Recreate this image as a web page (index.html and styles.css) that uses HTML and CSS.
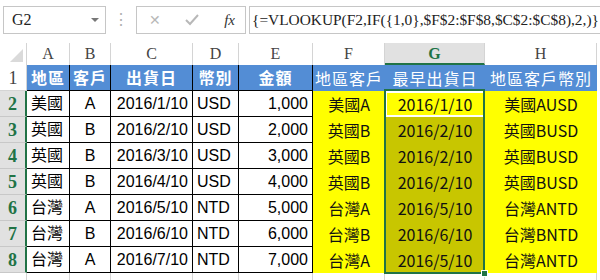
FILE: index.html
```html
<!DOCTYPE html>
<html lang="zh-Hant">
<head>
    <meta charset="UTF-8">
    <title>VLOOKUP 最早出貨日</title>
    <link rel="stylesheet" href="styles.css">
</head>
<body>
    <div class="formula-row">
        <div class="name-box">
            <span>G2</span>
            <span class="drop"></span>
        </div>
        <div class="grip">&#8942;</div>
        <div class="buttons">
            <span class="btn-x">&#x2715;</span>
            <svg class="btn-ok" width="14" height="12" viewBox="0 0 14 12"><path d="M1 6 L5 10 L13 1" fill="none" stroke="#b8b8b8" stroke-width="2"/></svg>
            <span class="btn-fx">fx</span>
        </div>
        <div class="formula">{=VLOOKUP(F2,IF({1,0},$F$2:$F$8,$C$2:$C$8),2,)}</div>
    </div>

    <div class="sheet">
        <!-- column headers -->
        <div class="corner"><span class="tri"></span></div>
        <div class="ch">A</div>
        <div class="ch">B</div>
        <div class="ch">C</div>
        <div class="ch">D</div>
        <div class="ch">E</div>
        <div class="ch">F</div>
        <div class="ch ch-sel">G</div>
        <div class="ch">H</div>
        <div class="ch ch-end"></div>

        <!-- row 1 -->
        <div class="rh">1</div>
        <div class="hd">地區</div>
        <div class="hd">客戶</div>
        <div class="hd">出貨日</div>
        <div class="hd">幣別</div>
        <div class="hd">金額</div>
        <div class="hd2">地區客戶</div>
        <div class="hd2">最早出貨日</div>
        <div class="hd2">地區客戶幣別</div>
        <div class="blank"></div>

        <div class="rh rh-sel">2</div>
        <div class="c l">美國</div><div class="c m">A</div><div class="c r">2016/1/10</div><div class="c l">USD</div><div class="c r">1,000</div>
        <div class="y">美國A</div><div class="y active">2016/1/10</div><div class="y">美國AUSD</div><div class="blank"></div>

        <div class="rh rh-sel">3</div>
        <div class="c l">英國</div><div class="c m">B</div><div class="c r">2016/2/10</div><div class="c l">USD</div><div class="c r">2,000</div>
        <div class="y">英國B</div><div class="y sel">2016/2/10</div><div class="y">英國BUSD</div><div class="blank"></div>

        <div class="rh rh-sel">4</div>
        <div class="c l">英國</div><div class="c m">B</div><div class="c r">2016/3/10</div><div class="c l">USD</div><div class="c r">3,000</div>
        <div class="y">英國B</div><div class="y sel">2016/2/10</div><div class="y">英國BUSD</div><div class="blank"></div>

        <div class="rh rh-sel">5</div>
        <div class="c l">英國</div><div class="c m">B</div><div class="c r">2016/4/10</div><div class="c l">USD</div><div class="c r">4,000</div>
        <div class="y">英國B</div><div class="y sel">2016/2/10</div><div class="y">英國BUSD</div><div class="blank"></div>

        <div class="rh rh-sel">6</div>
        <div class="c l">台灣</div><div class="c m">A</div><div class="c r">2016/5/10</div><div class="c l">NTD</div><div class="c r">5,000</div>
        <div class="y">台灣A</div><div class="y sel">2016/5/10</div><div class="y">台灣ANTD</div><div class="blank"></div>

        <div class="rh rh-sel">7</div>
        <div class="c l">台灣</div><div class="c m">B</div><div class="c r">2016/6/10</div><div class="c l">NTD</div><div class="c r">6,000</div>
        <div class="y">台灣B</div><div class="y sel">2016/6/10</div><div class="y">台灣BNTD</div><div class="blank"></div>

        <div class="rh rh-sel">8</div>
        <div class="c l">台灣</div><div class="c m">A</div><div class="c r">2016/7/10</div><div class="c l">NTD</div><div class="c r">7,000</div>
        <div class="y">台灣A</div><div class="y sel">2016/5/10</div><div class="y">台灣ANTD</div><div class="blank"></div>

        <!-- row 9 (cut off) -->
        <div class="rh rh-last"></div>
        <div class="e"></div><div class="e"></div><div class="e"></div><div class="e"></div><div class="e"></div>
        <div class="e"></div><div class="e"></div><div class="e"></div><div class="blank"></div>

        <div class="selection"></div>
        <div class="handle"></div>
    </div>
</body>
</html>
```

FILE: styles.css
```css
body {
    margin: 0;
    background: #fff;
    font-family: "Liberation Sans", "Noto Sans CJK TC", sans-serif;
    overflow: hidden;
}

/* formula bar */
.formula-row {
    height: 43px;
    display: flex;
    align-items: flex-start;
    padding-top: 6px;
    box-sizing: border-box;
    font-family: "Liberation Serif", serif;
}
.name-box {
    margin-left: 3px;
    width: 103px;
    height: 28px;
    box-sizing: border-box;
    border: 1px solid #c6c6c6;
    display: flex;
    align-items: center;
    justify-content: space-between;
    padding: 0 6px 0 8px;
    font-size: 16px;
    color: #222;
}
.drop {
    width: 0;
    height: 0;
    border-left: 4px solid transparent;
    border-right: 4px solid transparent;
    border-top: 4px solid #777;
}
.grip {
    width: 30px;
    text-align: center;
    color: #b0b0b0;
    font-size: 16px;
    line-height: 28px;
}
.buttons {
    width: 110px;
    height: 28px;
    box-sizing: border-box;
    border: 1px solid #c6c6c6;
    display: flex;
    align-items: center;
    justify-content: space-between;
    padding: 0 10px 0 12px;
}
.btn-x {
    color: #b8b8b8;
    font-family: "DejaVu Sans", sans-serif;
    font-size: 14px;
}
.btn-fx {
    font-style: italic;
    font-size: 15px;
    color: #333;
}
.formula {
    flex: 1;
    margin-left: 3px;
    height: 28px;
    box-sizing: border-box;
    border: 1px solid #c6c6c6;
    border-right: none;
    padding-left: 2px;
    font-size: 15.4px;
    line-height: 26px;
    white-space: nowrap;
    overflow: hidden;
    color: #222;
}

/* sheet grid */
.sheet {
    position: relative;
    display: grid;
    grid-template-columns: 27px 43px 41px 82px 46px 74px 72px 100px 112px 1fr;
    grid-template-rows: 22px repeat(8, 26px) 1fr;
    height: 237px;
}
.sheet > div {
    box-sizing: border-box;
}

.corner {
    border-right: 1px solid #d4d4d4;
    position: relative;
}
.tri {
    position: absolute;
    right: 3px;
    bottom: 3px;
    width: 0;
    height: 0;
    border-left: 13px solid transparent;
    border-bottom: 13px solid #dadada;
}
.ch {
    border-right: 1px solid #d4d4d4;
    text-align: center;
    font-family: "Liberation Serif", serif;
    font-size: 16px;
    line-height: 22px;
    color: #444;
}
.ch-sel {
    background: #e1e1e1;
    border-bottom: 2px solid #217346;
    color: #217346;
    font-weight: bold;
}
.ch-end {
    border-right: none;
}

.rh {
    border-right: 1px solid #d4d4d4;
    border-bottom: 1px solid #d4d4d4;
    text-align: center;
    font-family: "Liberation Serif", serif;
    font-size: 18px;
    line-height: 27px;
    color: #444;
}
.rh-sel {
    background: #e1e1e1;
    border-right: 2px solid #217346;
    border-bottom: 1px solid #c8c8c8;
    color: #217346;
    font-weight: bold;
}
.rh-last {
    border-bottom: none;
}

/* header row */
.hd {
    background: #538dd5;
    color: #fff;
    font-weight: bold;
    font-family: "Noto Sans CJK TC", sans-serif;
    font-size: 16px;
    line-height: 25px;
    text-align: center;
    border-right: 1px solid #000;
    border-bottom: 1px solid #000;
    letter-spacing: 1px;
}
.hd2 {
    background: #538dd5;
    color: #fff;
    font-family: "Noto Sans CJK TC", sans-serif;
    font-size: 16px;
    line-height: 26px;
    text-align: center;
    letter-spacing: 1px;
}

/* data cells A-E */
.c {
    border-right: 1px solid #000;
    border-bottom: 1px solid #000;
    font-size: 16px;
    line-height: 26px;
    color: #000;
    padding: 0 4px;
    white-space: nowrap;
}
.l { text-align: left; }
.m { text-align: center; }
.r { text-align: right; }

/* yellow cells F-H */
.y {
    background: #ffff00;
    font-family: "Noto Sans CJK TC", sans-serif;
    font-size: 16px;
    line-height: 26px;
    text-align: center;
    color: #111;
    white-space: nowrap;
}
.sel {
    background: #c8c600;
}
.active {
    box-shadow: inset 0 0 0 2px #fff;
}

.blank {
    border-right: none;
}
.e {
    border-right: 1px solid #d4d4d4;
}

/* selection outline G2:G8 */
.selection {
    position: absolute;
    left: 384px;
    top: 46px;
    width: 101px;
    height: 185px;
    border: 2px solid #217346;
    box-sizing: border-box;
    pointer-events: none;
}
.handle {
    position: absolute;
    left: 481px;
    top: 227px;
    width: 7px;
    height: 7px;
    background: #217346;
    border: 1px solid #fff;
}
```
